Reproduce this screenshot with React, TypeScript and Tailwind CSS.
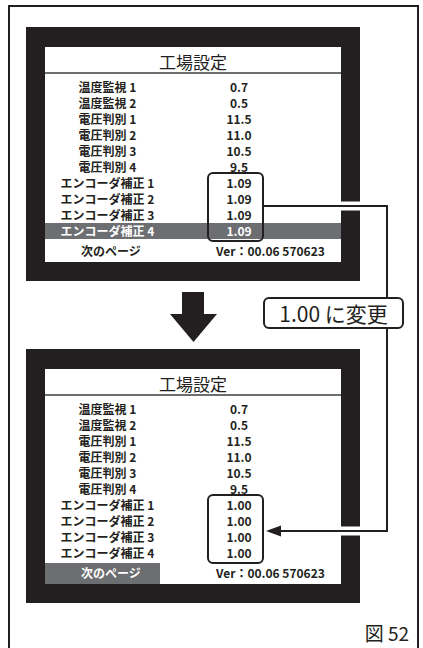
import React from "react";

const baseRows: [string, string][] = [
  ["温度監視 1", "0.7"],
  ["温度監視 2", "0.5"],
  ["電圧判別 1", "11.5"],
  ["電圧判別 2", "11.0"],
  ["電圧判別 3", "10.5"],
  ["電圧判別 4", "9.5"],
];

function Screen({ value, highlight }: { value: string; highlight: "enc4" | "next" }) {
  const enc = [1, 2, 3, 4];
  return (
    <div className="w-[334px] bg-[#231f20] px-[19px] pt-[20px] pb-[19px]">
      <div className="flex h-[215px] flex-col bg-white text-[#231f20]">
        <div className="h-[25px] pt-[6px] text-center text-[17px] leading-[17px]">工場設定</div>
        <div className="h-[1.5px] bg-[#6d6e71]" />
        <div className="mt-[5px] text-[12px] font-bold">
          {baseRows.map(([l, v]) => (
            <div key={l} className="grid h-[16px] grid-cols-[125px_138px] leading-[16px]">
              <div className="text-center">{l}</div>
              <div className="text-center">{v}</div>
            </div>
          ))}
          <div className="relative">
            {enc.map((n) => (
              <div
                key={n}
                className={
                  n === 4 && highlight === "enc4"
                    ? "grid h-[16px] grid-cols-[125px_138px] bg-[#6d6e71] leading-[16px] text-white"
                    : "grid h-[16px] grid-cols-[125px_138px] leading-[16px]"
                }
              >
                <div className="text-center">エンコーダ補正 {n}</div>
                <div className="text-center">{value}</div>
              </div>
            ))}
            <div className="absolute top-[-3px] bottom-[-3px] left-[162px] w-[57px] rounded-[6px] border-2 border-[#231f20]" />
          </div>
        </div>
        <div className="mt-[2px] flex flex-1 items-stretch text-[12px] font-bold">
          <div
            className={
              highlight === "next"
                ? "flex w-[115px] items-center bg-[#6d6e71] pl-[36px] text-white"
                : "flex w-[115px] items-center pl-[36px]"
            }
          >
            次のページ
          </div>
          <div className="ml-[56px] flex items-center">Ver：00.06 570623</div>
        </div>
      </div>
    </div>
  );
}

export default function App() {
  return (
    <div className="relative h-[648px] w-[423px] overflow-hidden bg-white font-['Noto_Sans_CJK_JP','Noto_Sans',sans-serif] text-[#231f20]">
      <div className="ml-[8px] mt-[5px] h-[700px] w-[411px] border-2 border-b-0 border-[#231f20]">
        <div className="ml-[16px] mt-[20px]">
          <Screen value="1.09" highlight="enc4" />
        </div>
        <div className="flex h-[68px] items-start">
          <svg className="ml-[160px] mt-[11px]" width="47" height="50" viewBox="0 0 47 50">
            <rect x="12" y="0" width="22" height="23" fill="#231f20" />
            <polygon points="0,22 47,22 23.5,50" fill="#231f20" />
          </svg>
          <div className="ml-[46px] mt-[16px] flex h-[32px] w-[141px] items-center justify-center rounded-[6px] border-2 border-[#231f20] bg-white text-[21px] leading-none">
            1.00 に変更
          </div>
        </div>
        <div className="ml-[16px]">
          <Screen value="1.00" highlight="next" />
        </div>
        <div className="mt-[19px] pr-[8px] text-right text-[19px] leading-[22px]">図 52</div>
      </div>
      <svg className="pointer-events-none absolute inset-0" width="423" height="648" viewBox="0 0 423 648">
        <line x1="267" y1="206" x2="386" y2="206" stroke="#ffffff" strokeWidth="9" />
        <polyline points="264,206 387,206 387,297" fill="none" stroke="#231f20" strokeWidth="2" />
        <line x1="283" y1="531" x2="386" y2="531" stroke="#ffffff" strokeWidth="9" />
        <polyline points="387,329 387,531 278,531" fill="none" stroke="#231f20" strokeWidth="2" />
        <polygon points="266,531 281,525.5 281,536.5" fill="#231f20" />
      </svg>
    </div>
  );
}
